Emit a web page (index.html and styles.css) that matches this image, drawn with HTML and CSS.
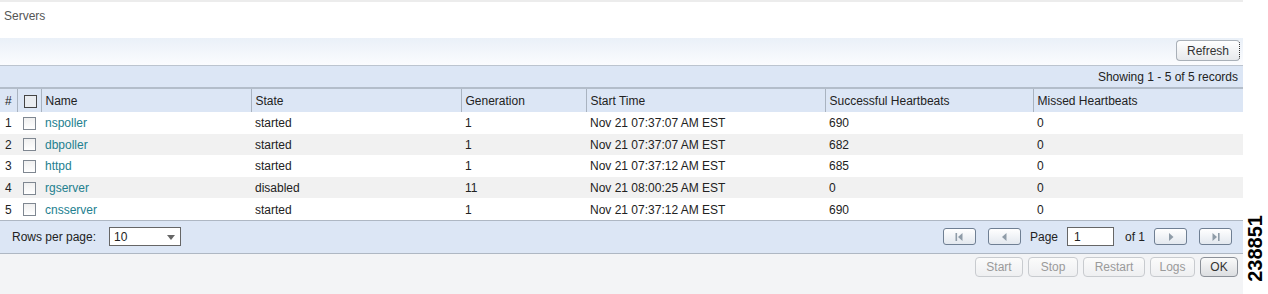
FILE: index.html
```
<!DOCTYPE html>
<html lang="en">
<head>
    <meta charset="UTF-8">
    <title>Servers</title>
    <link rel="stylesheet" href="styles.css">
</head>
<body>
<div class="page">
    <div class="main">
        <div class="title">Servers</div>
        <div class="toolbar">
            <button class="btn">Refresh</button>
        </div>
        <div class="showing">Showing 1 - 5 of 5 records</div>
        <table class="grid">
            <colgroup>
                <col class="c-num">
                <col class="c-chk">
                <col class="c-name">
                <col class="c-state">
                <col class="c-gen">
                <col class="c-time">
                <col class="c-ok">
                <col class="c-miss">
            </colgroup>
            <thead>
                <tr>
                    <th>#</th>
                    <th><span class="chk head"></span></th>
                    <th>Name</th>
                    <th>State</th>
                    <th>Generation</th>
                    <th>Start Time</th>
                    <th>Successful Heartbeats</th>
                    <th>Missed Heartbeats</th>
                </tr>
            </thead>
            <tbody>
                <tr>
                    <td>1</td><td><span class="chk"></span></td><td><a href="#">nspoller</a></td>
                    <td>started</td><td>1</td><td>Nov 21 07:37:07 AM EST</td><td>690</td><td>0</td>
                </tr>
                <tr>
                    <td>2</td><td><span class="chk"></span></td><td><a href="#">dbpoller</a></td>
                    <td>started</td><td>1</td><td>Nov 21 07:37:07 AM EST</td><td>682</td><td>0</td>
                </tr>
                <tr>
                    <td>3</td><td><span class="chk"></span></td><td><a href="#">httpd</a></td>
                    <td>started</td><td>1</td><td>Nov 21 07:37:12 AM EST</td><td>685</td><td>0</td>
                </tr>
                <tr>
                    <td>4</td><td><span class="chk"></span></td><td><a href="#">rgserver</a></td>
                    <td>disabled</td><td>11</td><td>Nov 21 08:00:25 AM EST</td><td>0</td><td>0</td>
                </tr>
                <tr>
                    <td>5</td><td><span class="chk"></span></td><td><a href="#">cnsserver</a></td>
                    <td>started</td><td>1</td><td>Nov 21 07:37:12 AM EST</td><td>690</td><td>0</td>
                </tr>
            </tbody>
        </table>
        <div class="pager">
            <div class="rows">
                <span>Rows per page:</span>
                <div class="select">10<span class="arrow"></span></div>
            </div>
            <div class="nav">
                <button class="pbtn">
                    <svg width="12" height="10" viewBox="0 0 12 10"><rect x="2.5" y="1" width="1.6" height="8" fill="#8f9ca8"/><polygon points="9.5,1 9.5,9 5,5" fill="#8f9ca8"/></svg>
                </button>
                <button class="pbtn gap">
                    <svg width="12" height="10" viewBox="0 0 12 10"><polygon points="8.5,1 8.5,9 4,5" fill="#8f9ca8"/></svg>
                </button>
                <span class="lbl">Page</span>
                <div class="pageinput">1</div>
                <span class="lbl">of 1</span>
                <button class="pbtn">
                    <svg width="12" height="10" viewBox="0 0 12 10"><polygon points="4,1 4,9 8.5,5" fill="#8f9ca8"/></svg>
                </button>
                <button class="pbtn gap">
                    <svg width="12" height="10" viewBox="0 0 12 10"><polygon points="2.5,1 2.5,9 7,5" fill="#8f9ca8"/><rect x="8" y="1" width="1.6" height="8" fill="#8f9ca8"/></svg>
                </button>
            </div>
        </div>
        <div class="actions">
            <button class="btn off w-start">Start</button>
            <button class="btn off w-stop">Stop</button>
            <button class="btn off w-restart">Restart</button>
            <button class="btn off w-logs">Logs</button>
            <button class="btn ok">OK</button>
        </div>
    </div>
    <div class="side">
        <span class="figno">238851</span>
    </div>
</div>
</body>
</html>
```

FILE: styles.css
```
*{
    padding:0;
    margin:0;
    box-sizing: border-box;
}
body{
    font-family: "Liberation Sans", Arial, sans-serif;
    font-size: 12px;
    color: #222;
    background: #fff;
}
.page{
    display: flex;
    width: 1268px;
    height: 294px;
    overflow: hidden;
}
.main{
    width: 1243px;
    display: flex;
    flex-direction: column;
}
.title{
    height: 38px;
    padding: 7px 0 0 4px;
    color: #555;
    border-top: 2px solid #ececec;
}
.toolbar{
    height: 28px;
    display: flex;
    justify-content: flex-end;
    align-items: flex-start;
    padding: 2px 3px 0 0;
    background: linear-gradient(#eaf0f8, #fbfcfe);
    border-bottom: 1px solid #bcc4cf;
}
.btn{
    font-family: inherit;
    font-size: 12px;
    color: #333;
    height: 20px;
    padding: 0 4px;
    border: 1px solid #a9b0b8;
    border-radius: 4px;
    background: linear-gradient(#ffffff, #e7e9ec);
}
.toolbar .btn{
    width: 64px;
    height: 21px;
    border-right: 1px dotted #333;
}
.showing{
    height: 23px;
    padding: 4px 5px 0 0;
    text-align: right;
    background: #dce6f5;
    border-bottom: 2px solid #b3bdca;
}
.grid{
    width: 1243px;
    border-collapse: collapse;
    table-layout: fixed;
}
.c-num{ width: 17px; }
.c-chk{ width: 24px; }
.c-name{ width: 210px; }
.c-state{ width: 210px; }
.c-gen{ width: 125px; }
.c-time{ width: 239px; }
.c-ok{ width: 208px; }
.c-miss{ width: 210px; }
.grid th{
    height: 23px;
    padding: 1px 4px 0;
    background: #dce6f5;
    font-weight: normal;
    text-align: left;
    border-left: 1px solid #a9b3c0;
}
.grid th:first-child{
    border-left: none;
}
.grid td{
    height: 21.6px;
    padding: 1px 4px 0;
    white-space: nowrap;
}
.grid tbody tr:nth-child(even) td{
    background: #f1f1f1;
}
.grid td:first-child, .grid th:first-child{
    padding-left: 5px;
}
.grid a{
    color: #23808f;
    text-decoration: none;
}
.chk{
    display: block;
    width: 13px;
    height: 13px;
    margin-left: 2px;
    border: 1px solid #7f8791;
    background: linear-gradient(#f0f0f0, #ffffff);
}
.chk.head{
    border-color: #444;
    background: #e9ecf0;
}
.pager{
    height: 34px;
    display: flex;
    justify-content: space-between;
    align-items: center;
    background: #dce6f5;
    border-top: 1px solid #aeb7c3;
    border-bottom: 1px solid #aeb7c3;
    padding: 0 11px 0 12px;
}
.rows{
    display: flex;
    align-items: center;
    gap: 13px;
}
.select{
    position: relative;
    width: 72px;
    height: 19px;
    border: 1px solid #666;
    background: #fff;
    padding: 2px 0 0 4px;
}
.arrow{
    position: absolute;
    right: 5px;
    top: 7px;
    border-left: 4px solid transparent;
    border-right: 4px solid transparent;
    border-top: 5px solid #666;
}
.nav{
    display: flex;
    align-items: center;
}
.pbtn{
    width: 33px;
    height: 17px;
    display: flex;
    align-items: center;
    justify-content: center;
    border: 1px solid #6f7f93;
    border-radius: 3px;
    background: linear-gradient(#ffffff, #e3e8ef);
}
.pbtn.gap{
    margin-left: 12px;
}
.lbl{
    margin: 0 9px;
}
.pageinput{
    width: 47px;
    height: 19px;
    border: 1px solid #666;
    background: #fff;
    padding: 2px 0 0 6px;
    margin-right: 2px;
}
.actions{
    flex: 1;
    display: flex;
    justify-content: flex-end;
    align-items: flex-start;
    gap: 5px;
    padding: 3px 5px 0 0;
    background: #f3f4f6;
}
.actions .btn{
    height: 20px;
}
.w-start{ width: 48px; }
.w-stop{ width: 50px; }
.w-restart{ width: 62px; }
.w-logs{ width: 45px; }
.btn.off{
    color: #9a9a9a;
    border-color: #c8cbcf;
    background: linear-gradient(#fbfbfb, #eeeff1);
}
.btn.ok{
    width: 38px;
    border-color: #8b9098;
    background: linear-gradient(#fafafa, #dcdee1);
}
.side{
    flex: 1;
    display: flex;
    flex-direction: column;
    justify-content: flex-end;
    align-items: center;
    padding-bottom: 12px;
}
.figno{
    writing-mode: vertical-rl;
    transform: rotate(180deg);
    font-size: 20px;
    font-weight: bold;
    color: #000;
}
```
